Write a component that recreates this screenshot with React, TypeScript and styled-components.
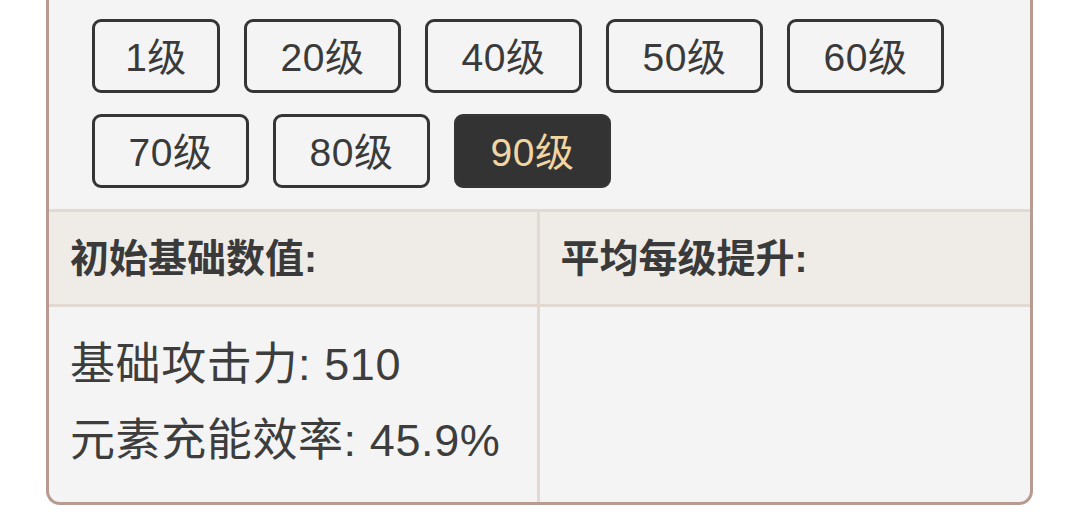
import React, { useState } from 'react';
import styled, { createGlobalStyle } from 'styled-components';

const GlobalStyle = createGlobalStyle`
  html, body {
    margin: 0;
    padding: 0;
    background: #ffffff;
  }
  body {
    font-family: 'Liberation Sans', 'Noto Sans CJK SC', sans-serif;
    color: #3a3a3a;
  }
`;

const Card = styled.div`
  margin: 0 46px;
  background: #f4f4f4;
  border: 3px solid #b89b90;
  border-top: none;
  border-radius: 0 0 14px 14px;
  overflow: hidden;
`;

const LevelGrid = styled.div`
  display: flex;
  flex-wrap: wrap;
  gap: 21px 24px;
  padding: 19px 43px 21px;
`;

const LevelButton = styled.button<{ $active?: boolean; $width: number }>`
  box-sizing: border-box;
  width: ${(p) => p.$width}px;
  height: 74px;
  padding: 0 0 4px;
  display: flex;
  align-items: center;
  justify-content: center;
  border: 3px solid #353535;
  border-radius: 9px;
  background: ${(p) => (p.$active ? '#333333' : 'transparent')};
  color: ${(p) => (p.$active ? '#f1d6a3' : '#3a3a3a')};
  font-family: 'Liberation Sans', 'Noto Sans CJK SC', sans-serif;
  font-size: 39px;
  letter-spacing: 0.5px;
  cursor: pointer;
`;

const StatsTable = styled.div`
  display: grid;
  grid-template-columns: 1fr 1fr;
  border-top: 3px solid #e1d9d2;
`;

const HeaderCell = styled.div<{ $divider?: boolean }>`
  box-sizing: border-box;
  height: 95px;
  padding: 0 21px 7px;
  display: flex;
  align-items: center;
  background: #efece8;
  border-bottom: 3px solid #e1d9d2;
  border-right: ${(p) => (p.$divider ? '3px solid #e1d9d2' : 'none')};
  font-size: 39px;
  font-weight: bold;
  color: #3a3a3a;
`;

const BodyCell = styled.div<{ $divider?: boolean }>`
  box-sizing: border-box;
  padding: 20px 21px 23px;
  border-right: ${(p) => (p.$divider ? '3px solid #e1d9d2' : 'none')};
  font-size: 45px;
  line-height: 76px;
  letter-spacing: 0.6px;
  color: #3d3d3d;
`;

const levels = [1, 20, 40, 50, 60, 70, 80, 90];

const baseStats = [
  { label: '基础攻击力', value: '510' },
  { label: '元素充能效率', value: '45.9%' },
];

export default function App() {
  const [level, setLevel] = useState(90);

  return (
    <>
      <GlobalStyle />
      <Card>
        <LevelGrid>
          {levels.map((lv) => (
            <LevelButton
              key={lv}
              $active={lv === level}
              $width={lv < 10 ? 128 : 157}
              onClick={() => setLevel(lv)}
            >
              {lv}级
            </LevelButton>
          ))}
        </LevelGrid>
        <StatsTable>
          <HeaderCell $divider>初始基础数值:</HeaderCell>
          <HeaderCell>平均每级提升:</HeaderCell>
          <BodyCell $divider>
            {baseStats.map((s) => (
              <div key={s.label}>
                {s.label}: {s.value}
              </div>
            ))}
          </BodyCell>
          <BodyCell />
        </StatsTable>
      </Card>
    </>
  );
}
